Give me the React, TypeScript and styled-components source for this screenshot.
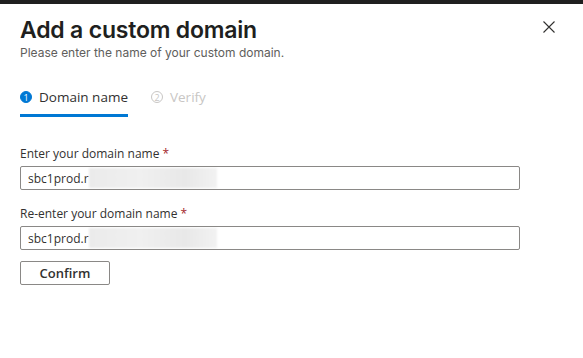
import React from 'react';
import styled, { createGlobalStyle } from 'styled-components';

const GlobalStyle = createGlobalStyle`
  html, body {
    margin: 0;
    padding: 0;
    background: #ffffff;
  }
  body {
    font-family: 'Open Sans', 'Liberation Sans', sans-serif;
    color: #323130;
  }
`;

const steps = [
  { num: 1, label: 'Domain name', active: true },
  { num: 2, label: 'Verify', active: false },
];

const fields = [
  { label: 'Enter your domain name', value: 'sbc1prod.r' },
  { label: 'Re-enter your domain name', value: 'sbc1prod.r' },
];

const App: React.FC = () => {
  return (
    <>
      <GlobalStyle />
      <Page>
        <TopBar />
        <Panel>
          <Header>
            <HeaderText>
              <Title>Add a custom domain</Title>
              <Subtitle>Please enter the name of your custom domain.</Subtitle>
            </HeaderText>
            <CloseButton aria-label="Close">
              <svg width="12" height="12" viewBox="0 0 12 12">
                <path d="M0.5 0.5 L11.5 11.5 M11.5 0.5 L0.5 11.5" stroke="#323130" strokeWidth="1.1" />
              </svg>
            </CloseButton>
          </Header>

          <Tabs>
            {steps.map((step) => (
              <Tab key={step.num} $active={step.active}>
                <StepCircle $active={step.active}>{step.num}</StepCircle>
                {step.label}
              </Tab>
            ))}
          </Tabs>

          <Form>
            {fields.map((field) => (
              <Field key={field.label}>
                <Label>
                  {field.label} <Required>*</Required>
                </Label>
                <InputBox>
                  <InputText>{field.value}</InputText>
                  <Redacted />
                </InputBox>
              </Field>
            ))}
            <ConfirmButton>Confirm</ConfirmButton>
          </Form>
        </Panel>
      </Page>
    </>
  );
};

const Page = styled.div`
  width: 583px;
  height: 358px;
  display: flex;
  flex-direction: column;
  background: #ffffff;
  overflow: hidden;
`;

const TopBar = styled.div`
  height: 4px;
  background: #1f1f1f;
  flex-shrink: 0;
`;

const Panel = styled.div`
  display: flex;
  flex-direction: column;
  padding: 0 28px 0 20px;
`;

const Header = styled.div`
  display: flex;
  justify-content: space-between;
  align-items: flex-start;
`;

const HeaderText = styled.div`
  display: flex;
  flex-direction: column;
`;

const Title = styled.h1`
  margin: 11px 0 0;
  font-family: Inter, 'Liberation Sans', sans-serif;
  font-size: 23px;
  font-weight: 600;
  line-height: 30px;
  color: #201f1e;
  letter-spacing: -0.2px;
`;

const Subtitle = styled.p`
  margin: 0;
  font-family: Inter, 'Liberation Sans', sans-serif;
  font-size: 12px;
  line-height: 16px;
  color: #605e5c;
`;

const CloseButton = styled.button`
  margin-top: 17px;
  padding: 0;
  border: none;
  background: transparent;
  width: 12px;
  height: 12px;
  display: flex;
  cursor: pointer;
`;

const Tabs = styled.div`
  display: flex;
  gap: 23px;
  margin-top: 26px;
`;

const Tab = styled.div<{ $active: boolean }>`
  display: flex;
  align-items: center;
  gap: 7px;
  height: 20px;
  padding-bottom: 7px;
  font-size: 13.5px;
  color: ${({ $active }) => ($active ? '#323130' : '#c8c6c4')};
  border-bottom: 3px solid ${({ $active }) => ($active ? '#0078d4' : 'transparent')};
`;

const StepCircle = styled.span<{ $active: boolean }>`
  width: 12px;
  height: 12px;
  border-radius: 50%;
  box-sizing: border-box;
  display: inline-flex;
  align-items: center;
  justify-content: center;
  font-size: 9px;
  line-height: 1;
  color: ${({ $active }) => ($active ? '#ffffff' : '#c8c6c4')};
  background: ${({ $active }) => ($active ? '#0078d4' : 'transparent')};
  border: 1px solid ${({ $active }) => ($active ? '#0078d4' : '#c8c6c4')};
`;

const Form = styled.div`
  display: flex;
  flex-direction: column;
  margin-top: 28px;
  width: 500px;
`;

const Field = styled.div`
  display: flex;
  flex-direction: column;
  margin-bottom: 15px;

  &:last-of-type {
    margin-bottom: 11px;
  }
`;

const Label = styled.label`
  font-size: 12px;
  line-height: 18px;
  color: #323130;
  margin-bottom: 3px;
`;

const Required = styled.span`
  color: #a4262c;
`;

const InputBox = styled.div`
  height: 24px;
  box-sizing: border-box;
  border: 1px solid #8a8886;
  border-radius: 2px;
  display: flex;
  align-items: center;
  padding-left: 7px;
  overflow: hidden;
`;

const InputText = styled.span`
  font-size: 12px;
  color: #323130;
  white-space: nowrap;
`;

const Redacted = styled.span`
  width: 128px;
  height: 20px;
  background: linear-gradient(90deg, #ebebeb 0%, #f0f0f0 40%, #e8e8e8 75%, #f2f2f2 100%);
  filter: blur(1px);
`;

const ConfirmButton = styled.button`
  width: 90px;
  height: 24px;
  box-sizing: border-box;
  border: 1px solid #8a8886;
  border-radius: 2px;
  background: #ffffff;
  font-family: 'Open Sans', 'Liberation Sans', sans-serif;
  font-size: 13px;
  font-weight: 600;
  color: #323130;
  padding: 0;
  cursor: pointer;
`;

export default App;
